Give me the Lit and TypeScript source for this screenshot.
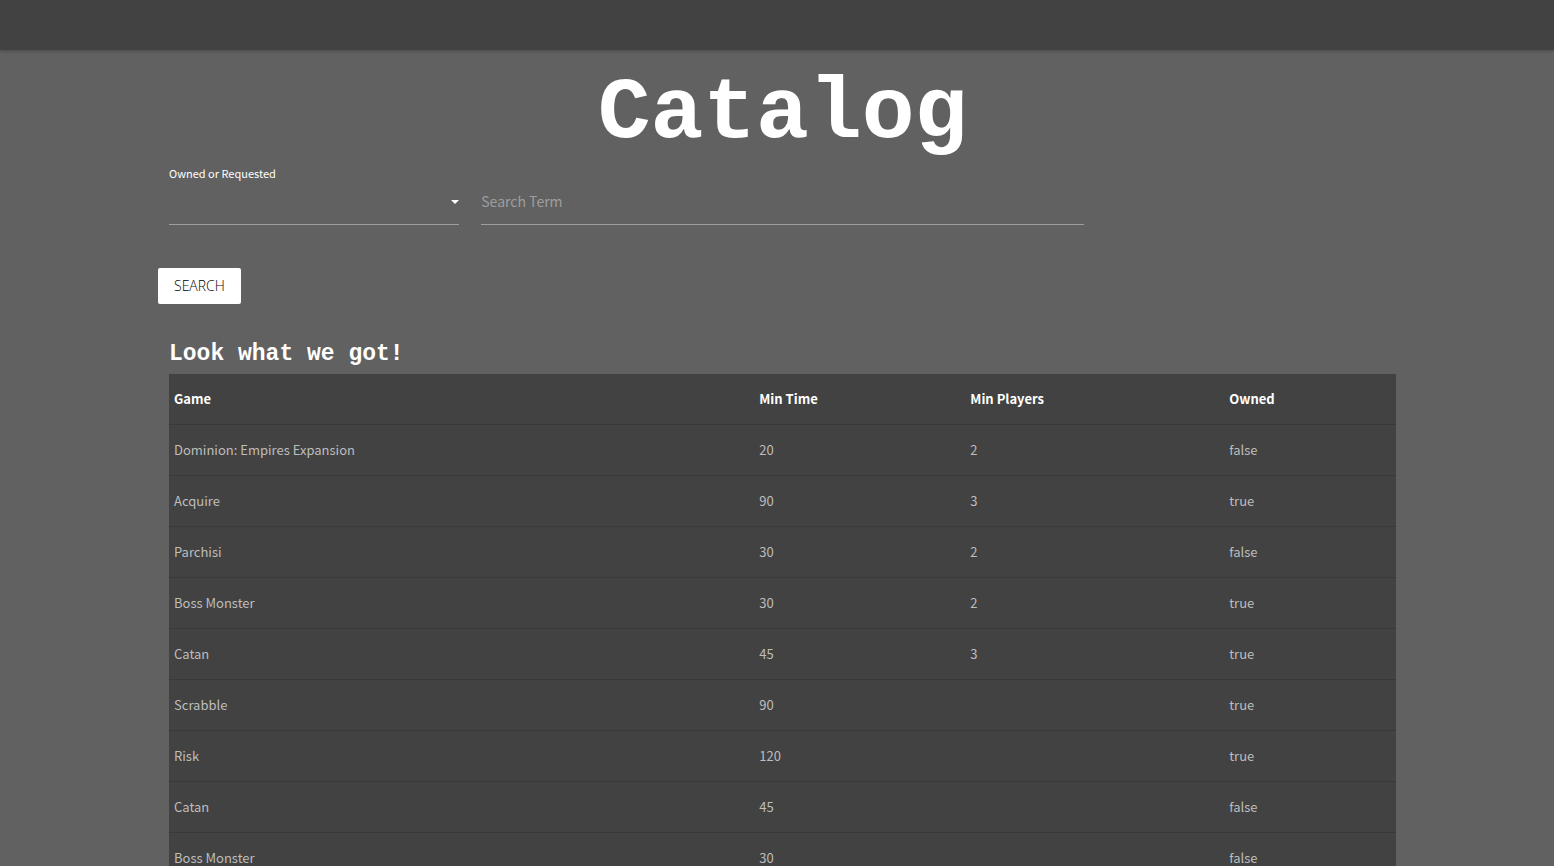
import { LitElement, html, css, nothing } from "lit";
import { customElement, state } from "lit/decorators.js";

interface Game {
  name: string;
  minTime: number;
  minPlayers?: number;
  owned: boolean;
}

const GAMES: Game[] = [
  { name: "Dominion: Empires Expansion", minTime: 20, minPlayers: 2, owned: false },
  { name: "Acquire", minTime: 90, minPlayers: 3, owned: true },
  { name: "Parchisi", minTime: 30, minPlayers: 2, owned: false },
  { name: "Boss Monster", minTime: 30, minPlayers: 2, owned: true },
  { name: "Catan", minTime: 45, minPlayers: 3, owned: true },
  { name: "Scrabble", minTime: 90, owned: true },
  { name: "Risk", minTime: 120, owned: true },
  { name: "Catan", minTime: 45, owned: false },
  { name: "Boss Monster", minTime: 30, owned: false },
];

@customElement("game-table")
export class GameTable extends LitElement {
  static properties = { games: { attribute: false } };
  declare games: Game[];

  constructor() {
    super();
    this.games = [];
  }

  static styles = css`
    :host {
      display: block;
    }
    .table {
      width: 100%;
      table-layout: fixed;
      border-collapse: separate;
      border-spacing: 0;
      background: #424242;
      color: #bdbdbd;
      font-size: 13px;
      line-height: 20px;
    }
    .cell {
      box-sizing: border-box;
      padding: 15px 5px;
      text-align: left;
      font-weight: 400;
      border-bottom: 1px solid #393939;
    }
    .name { width: 47.7%; }
    .time { width: 17.2%; }
    .players { width: 21.1%; }
    .owned { width: 14%; }
    .head {
      color: #fff;
      font-weight: 700;
    }
  `;

  render() {
    return html`
      <table class="table">
        <thead>
          <tr>
            <th class="cell head name" scope="col">Game</th>
            <th class="cell head time" scope="col">Min Time</th>
            <th class="cell head players" scope="col">Min Players</th>
            <th class="cell head owned" scope="col">Owned</th>
          </tr>
        </thead>
        <tbody>
          ${this.games.map(
            (g) => html`<tr>
              <td class="cell">${g.name}</td>
              <td class="cell">${g.minTime}</td>
              <td class="cell">${g.minPlayers ?? nothing}</td>
              <td class="cell">${String(g.owned)}</td>
            </tr>`
          )}
        </tbody>
      </table>
    `;
  }
}

@customElement("app-root")
export class AppRoot extends LitElement {
  @state() private term = "";

  static styles = css`
    :host {
      display: block;
      height: 100vh;
      overflow-y: auto;
      scrollbar-width: none;
      background: #616161;
      color: #fff;
      font-family: "Noto Sans CJK SC", "Noto Sans", sans-serif;
    }
    .nav {
      height: 50px;
      background: #424242;
      box-shadow: 0 1px 3px rgba(0, 0, 0, 0.25);
    }
    .page {
      padding: 20px 147px 0 158px;
    }
    .title,
    .subtitle {
      margin: 0;
      font-family: "Liberation Mono", monospace;
      font-weight: 700;
    }
    .title {
      font-size: 88px;
      line-height: 88px;
      text-align: center;
    }
    .filters {
      display: grid;
      grid-template-columns: 3fr 6fr 3fr;
    }
    .field {
      display: flex;
      flex-direction: column;
      min-width: 0;
      padding: 7px 11px 0;
    }
    .label {
      height: 16px;
      font-size: 11px;
      line-height: 16px;
    }
    .picker {
      display: grid;
      align-items: center;
    }
    .picker > * {
      grid-area: 1 / 1;
    }
    .control {
      box-sizing: border-box;
      width: 100%;
      height: 44px;
      margin: 0;
      padding: 0 0 4px;
      border: 0;
      border-bottom: 1px solid #9e9e9e;
      border-radius: 0;
      outline: 0;
      background: transparent;
      color: #fff;
      font: 400 14px/20px "Noto Sans CJK SC", "Noto Sans", sans-serif;
      appearance: none;
    }
    .control:focus {
      border-bottom-color: #fff;
    }
    .control::placeholder {
      color: #9e9e9e;
      opacity: 1;
    }
    .caret {
      justify-self: end;
      margin-bottom: 2px;
      pointer-events: none;
      fill: #fff;
    }
    .search {
      display: block;
      height: 36px;
      margin: 43px 0 0;
      padding: 0 16px;
      border: 0;
      border-radius: 2px;
      background: #fff;
      color: #000;
      font: 300 14px/36px "Open Sans", sans-serif;
    }
    .results {
      padding: 36px 11px 0;
    }
    .subtitle {
      padding-bottom: 6px;
      font-size: 23px;
      line-height: 28px;
    }
  `;

  render() {
    return html`
      <nav class="nav"></nav>
      <main class="page">
        <h1 class="title">Catalog</h1>
        <form @submit=${(e: Event) => e.preventDefault()}>
          <div class="filters">
            <div class="field">
              <label class="label" for="status">Owned or Requested</label>
              <div class="picker">
                <select class="control" id="status">
                  <option value=""></option>
                  <option value="owned">Owned</option>
                  <option value="requested">Requested</option>
                </select>
                <svg class="caret" width="8" height="4" viewBox="0 0 8 4" aria-hidden="true">
                  <path d="M0 0h8L4 4z"></path>
                </svg>
              </div>
            </div>
            <div class="field">
              <span class="label"></span>
              <input
                class="control"
                type="text"
                placeholder="Search Term"
                aria-label="Search Term"
                .value=${this.term}
                @input=${(e: InputEvent) => (this.term = (e.target as HTMLInputElement).value)}
              />
            </div>
          </div>
          <button class="search" type="submit">SEARCH</button>
        </form>
        <section class="results">
          <h2 class="subtitle">Look what we got!</h2>
          <game-table .games=${GAMES}></game-table>
        </section>
      </main>
    `;
  }
}
